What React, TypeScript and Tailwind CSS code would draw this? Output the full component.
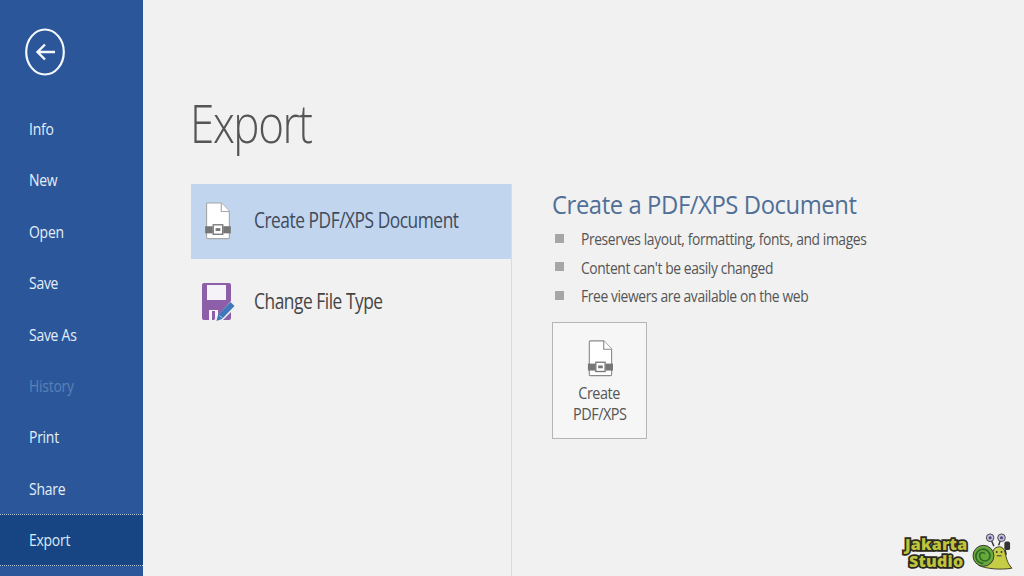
const FONT = "font-['Open_Sans',sans-serif]";

const NAV = [
  { label: "Info" },
  { label: "New" },
  { label: "Open" },
  { label: "Save" },
  { label: "Save As" },
  { label: "History", disabled: true },
  { label: "Print" },
  { label: "Share" },
  { label: "Export", active: true },
];

function PdfIcon({ className, stroke }: { className: string; stroke: string }) {
  return (
    <svg viewBox="0 0 28 40" className={className} fill="none">
      <path d="M3.5 1H18L26.5 10V37.5a1 1 0 0 1-1 1H3.5a1 1 0 0 1-1-1V2a1 1 0 0 1 1-1Z" fill="#fff" stroke={stroke} strokeWidth="1.2" />
      <path d="M18 1V10H26.5" fill="#fff" stroke={stroke} strokeWidth="1.2" />
      <rect x="1" y="25.5" width="8" height="7.5" fill="#767676" />
      <rect x="20" y="25.5" width="8" height="7.5" fill="#767676" />
      <rect x="9.5" y="24" width="10" height="10" fill="#fff" stroke="#767676" strokeWidth="1.4" />
      <rect x="12" y="27.5" width="5" height="3" fill="#767676" />
    </svg>
  );
}

function SaveEditIcon() {
  return (
    <svg viewBox="0 0 36 40" className="w-[36px] h-[40px]" fill="none">
      <path d="M1 3a2 2 0 0 1 2-2h25a2 2 0 0 1 2 2v33a2 2 0 0 1-2 2H3a2 2 0 0 1-2-2Z" fill="#8d5fa8" />
      <rect x="6" y="3" width="19" height="15" fill="#f6f3f8" />
      <rect x="8" y="28" width="9" height="10" fill="#f6f3f8" />
      <rect x="11" y="29" width="3" height="9" fill="#8d5fa8" />
      <path d="M13 38 L30 19 L36 24 L20 40Z" fill="#f1f1f1" />
      <path d="M17 33 L29.5 20 L33.5 24 L21 37 L15.5 39Z" fill="#3f78b8" />
      <path d="M18.5 33.5 L22 36.5" stroke="#a9c6e4" strokeWidth="1" />
    </svg>
  );
}

function Snail() {
  return (
    <svg viewBox="0 0 44 40" className="w-[42px] h-[38px]">
      <path d="M24 14 L21 7 M29 13 L31 7" stroke="#333" strokeWidth="1.5" />
      <circle cx="20" cy="5" r="4" fill="#c4bfe0" stroke="#444" />
      <circle cx="32" cy="5" r="4" fill="#c4bfe0" stroke="#444" />
      <circle cx="20" cy="5" r="1.6" fill="#4a4a7a" />
      <circle cx="32" cy="5" r="1.6" fill="#4a4a7a" />
      <path d="M8 34 C16 31 20 30 22 22 C23 14 32 12 35 18 C37 24 37 31 43 37 C32 39 16 38 8 34Z" fill="#c5cc45" stroke="#3a3a20" />
      <circle cx="13" cy="24" r="11" fill="#6aa83c" stroke="#333" />
      <path d="M13 32 A7.5 7.5 0 1 1 20 24 A5.5 5.5 0 0 1 9 24 A3 3 0 0 1 14.5 22" fill="none" stroke="#2c6a24" strokeWidth="1.7" />
      <rect x="35" y="9" width="6" height="9" rx="2" fill="#333" />
      <path d="M36 18 L37 23" stroke="#333" strokeWidth="1.5" />
      <circle cx="27" cy="20" r="1" fill="#333" />
      <circle cx="32" cy="20" r="1" fill="#333" />
      <path d="M27 24 H32" stroke="#333" strokeWidth="1" />
    </svg>
  );
}

function Watermark() {
  const cls =
    "font-['Open_Sans',sans-serif] font-extrabold text-[16px] leading-[16px] tracking-[0.2px] text-[#bfc43c] [-webkit-text-stroke:3.5px_#2a2a20] [paint-order:stroke_fill]";
  return (
    <div className="absolute left-[905px] top-[533px] flex items-center gap-[4px]">
      <div className="flex flex-col items-center gap-[1px]">
        <span className={cls}>Jakarta</span>
        <span className={cls}>Studio</span>
      </div>
      <Snail />
    </div>
  );
}

export default function App() {
  return (
    <div className={`relative flex w-[1024px] h-[576px] overflow-hidden bg-[#f1f1f1] ${FONT}`}>
      <aside className="w-[143px] h-full bg-[#2b579a] flex flex-col shrink-0">
        <div className="h-[103px] shrink-0 pl-[25px] pt-[28px]">
          <svg viewBox="0 0 40 48" className="w-[40px] h-[48px]" fill="none" stroke="#f4f8fc">
            <ellipse cx="20" cy="24" rx="18.8" ry="22.5" strokeWidth="2.2" />
            <path d="M30 24H12.5M20 16.5L12.5 24L20 31.5" strokeWidth="2.4" />
          </svg>
        </div>
        {NAV.map((n) => (
          <div
            key={n.label}
            className={`h-[51.4px] shrink-0 flex items-center pl-[29px] text-[17px] ${
              n.active
                ? "bg-[#174584] border-y border-dotted border-[#b8c8dc] text-[#dcebf8]"
                : n.disabled
                  ? "text-[#5b80b6]"
                  : "text-[#e4eef8]"
            }`}
          >
            <span className="inline-block origin-left scale-x-[0.82] tracking-[-0.3px]">{n.label}</span>
          </div>
        ))}
      </aside>

      <main className="flex-1 flex flex-col pl-[47px] min-w-0">
        <h1 className="h-[184px] pt-[90px] text-[53px] leading-[66px] font-light text-[#555]">
          <span className="inline-block origin-left scale-x-[0.83] tracking-[-1.7px]">Export</span>
        </h1>
        <div className="flex flex-1 ml-[1px]">
          <div className="w-[321px] border-r border-[#dcdcdc] shrink-0">
            <div className="h-[75px] w-[320px] bg-[#c1d5ef] flex items-center pb-[1px]">
              <div className="w-[63px] pl-[13px] shrink-0">
                <PdfIcon className="w-[27px] h-[38px]" stroke="#a8a8a8" />
              </div>
              <span className="inline-block origin-left scale-x-[0.825] text-[21px] tracking-[-0.55px] text-[#3f4a5a]">Create PDF/XPS Document</span>
            </div>
            <div className="h-[85px] flex items-center">
              <div className="w-[63px] pl-[10px] shrink-0">
                <SaveEditIcon />
              </div>
              <span className="inline-block origin-left scale-x-[0.825] text-[21px] tracking-[-0.55px] text-[#444]">Change File Type</span>
            </div>
          </div>
          <div className="pl-[40px]">
            <h2 className="text-[26px] leading-[40px] text-[#4f6f97]">
              <span className="inline-block origin-left scale-x-[0.916] tracking-[-0.45px]">Create a PDF/XPS Document</span>
            </h2>
            <ul className="mt-[1px] flex flex-col">
              {[
                "Preserves layout, formatting, fonts, and images",
                "Content can't be easily changed",
                "Free viewers are available on the web",
              ].map((t) => (
                <li key={t} className="h-[28.5px] flex items-center text-[16px] text-[#555]">
                  <span className="w-[9px] h-[9px] bg-[#a6a6a6] ml-[3px] mr-[17px] -mt-[2px] shrink-0" />
                  <span className="inline-block origin-left scale-x-[0.865] tracking-[-0.45px]">{t}</span>
                </li>
              ))}
            </ul>
            <button className="mt-[11px] w-[95px] h-[117px] border-[1.5px] border-[#b5b5b5] bg-[#f6f6f6] flex flex-col items-center pt-[16px] text-[16px] leading-[21px] tracking-[-0.5px] text-[#555]">
              <PdfIcon className="w-[26px] h-[39px] mb-[5px]" stroke="#8a8a8a" />
              <span className="inline-block scale-x-[0.9]">Create</span>
              <span className="inline-block scale-x-[0.9]">PDF/XPS</span>
            </button>
          </div>
        </div>
      </main>
      <Watermark />
    </div>
  );
}
